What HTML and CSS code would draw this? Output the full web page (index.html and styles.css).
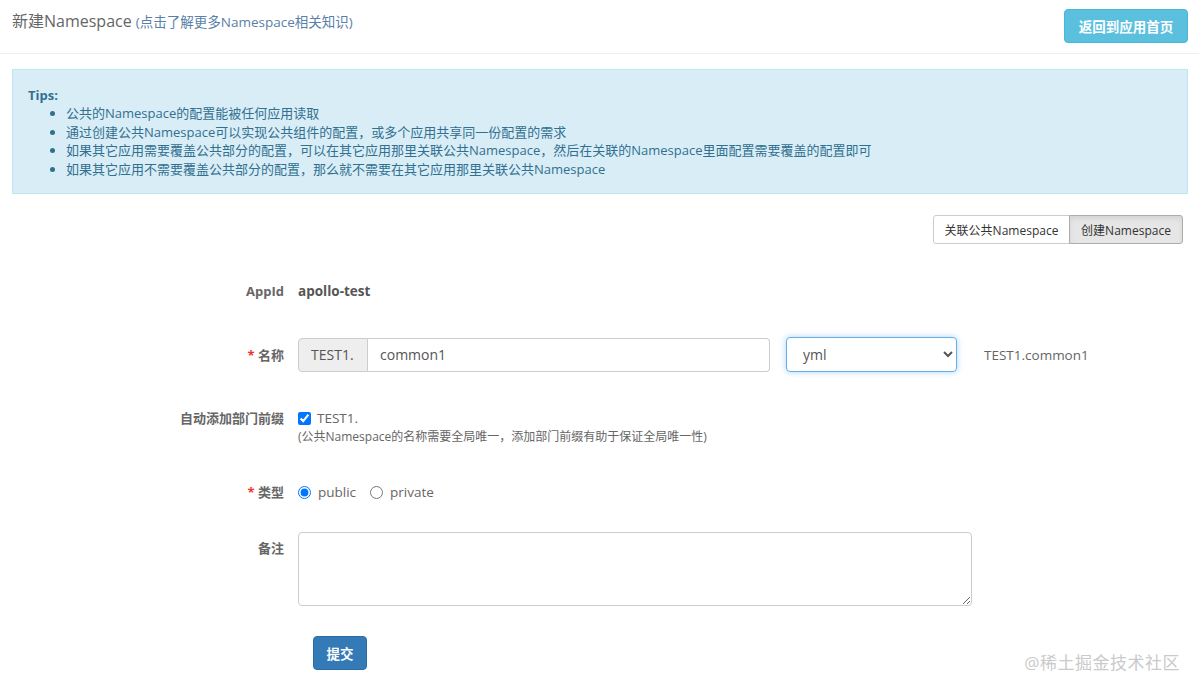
FILE: index.html
```html
<!DOCTYPE html>
<html lang="zh-CN">
<head>
<meta charset="utf-8">
<title>新建Namespace</title>
<link rel="stylesheet" href="styles.css">
</head>
<body>
<div class="page">
  <header class="header">
    <h1 class="title">新建Namespace <a class="title-link" href="#">(点击了解更多Namespace相关知识)</a></h1>
    <button class="btn btn-info">返回到应用首页</button>
  </header>

  <div class="alert">
    <div class="tips-title">Tips:</div>
    <ul class="tips-list">
      <li>公共的Namespace的配置能被任何应用读取</li>
      <li>通过创建公共Namespace可以实现公共组件的配置，或多个应用共享同一份配置的需求</li>
      <li>如果其它应用需要覆盖公共部分的配置，可以在其它应用那里关联公共Namespace，然后在关联的Namespace里面配置需要覆盖的配置即可</li>
      <li>如果其它应用不需要覆盖公共部分的配置，那么就不需要在其它应用那里关联公共Namespace</li>
    </ul>
  </div>

  <div class="toolbar">
    <div class="btn-group">
      <button class="btn-seg">关联公共Namespace</button>
      <button class="btn-seg active">创建Namespace</button>
    </div>
  </div>

  <form class="form">
    <div class="row row-appid">
      <label class="label">AppId</label>
      <div class="control"><span class="appid-value">apollo-test</span></div>
    </div>

    <div class="row row-name">
      <label class="label"><span class="req">*</span> 名称</label>
      <div class="control control-name">
        <div class="input-group">
          <span class="addon">TEST1.</span>
          <input class="input" type="text" value="common1">
        </div>
        <select class="select">
          <option>yml</option>
          <option>properties</option>
          <option>xml</option>
          <option>json</option>
          <option>yaml</option>
        </select>
        <span class="preview">TEST1.common1</span>
      </div>
    </div>

    <div class="row row-prefix">
      <label class="label">自动添加部门前缀</label>
      <div class="control">
        <label class="check"><input type="checkbox" checked> TEST1.</label>
        <div class="help">(公共Namespace的名称需要全局唯一，添加部门前缀有助于保证全局唯一性)</div>
      </div>
    </div>

    <div class="row row-type">
      <label class="label"><span class="req">*</span> 类型</label>
      <div class="control radios">
        <label class="radio"><input type="radio" name="t" checked> public</label>
        <label class="radio"><input type="radio" name="t"> private</label>
      </div>
    </div>

    <div class="row row-notes">
      <label class="label label-notes">备注</label>
      <div class="control"><textarea class="textarea"></textarea></div>
    </div>

    <div class="row row-submit">
      <button type="button" class="btn btn-primary">提交</button>
    </div>
  </form>

  <div class="watermark">@稀土掘金技术社区</div>
</div>
</body>
</html>
```

FILE: styles.css
```css
* { box-sizing: border-box; }
html, body { margin: 0; padding: 0; background: #fff; }
body {
  font-family: "Open Sans", "Noto Sans CJK SC", sans-serif;
  font-size: 13px;
  color: #333;
}
.page { position: relative; width: 1199px; height: 692px; overflow: hidden; }

.header {
  display: flex;
  justify-content: space-between;
  align-items: flex-start;
  height: 54px;
  padding: 9px 11px 0 12px;
  border-bottom: 1px solid #eeeeee;
}
.title {
  margin: 0;
  font-size: 16px;
  font-weight: normal;
  color: #666;
  line-height: 24px;
}
.title-link { font-size: 13.5px; color: #5a7fa8; text-decoration: none; }

.btn {
  border: 1px solid transparent;
  border-radius: 4px;
  font-family: inherit;
  color: #fff;
  cursor: pointer;
}
.btn-info {
  background: #5bc0de;
  border-color: #46b8da;
  font-size: 13.5px;
  font-weight: 600;
  height: 34px;
  width: 124px;
  padding: 0;
}
.btn-primary {
  background: #337ab7;
  border-color: #2e6da4;
  font-size: 13.5px;
  font-weight: 600;
  height: 34px;
  width: 54px;
  padding: 0;
}

.alert {
  margin: 15px 11px 0 12px;
  background: #d9edf7;
  border: 1px solid #bce8f1;
  color: #31708f;
  padding: 16px 15px 15px 15px;
  line-height: 18.4px;
}
.tips-title { font-weight: bold; font-size: 13px; }
.tips-list { margin: 0; padding-left: 38px; font-size: 13px; }

.toolbar { display: flex; justify-content: flex-end; padding-right: 16px; margin-top: 21px; }
.btn-group { display: flex; }
.btn-seg {
  font-family: inherit;
  font-size: 12px;
  height: 29px;
  padding: 0 10px;
  background: #fff;
  border: 1px solid #ccc;
  color: #333;
}
.btn-seg:first-child { border-radius: 3px 0 0 3px; width: 137px; }
.btn-seg:last-child { border-radius: 0 3px 3px 0; margin-left: -1px; width: 114px; }
.btn-seg.active { background: #e6e6e6; border-color: #adadad; box-shadow: inset 0 3px 5px rgba(0,0,0,.08); }

.form { display: flex; flex-direction: column; }
.row { display: flex; align-items: flex-start; }
.label {
  width: 284px;
  margin-right: 14px;
  text-align: right;
  font-weight: bold;
  color: #666;
  font-size: 13px;
  line-height: 20px;
}
.req { color: #e33; }
.control { color: #555; line-height: 20px; }

.row-appid { margin-top: 37px; }
.appid-value { font-weight: bold; color: #555; font-size: 13.5px; }

.row-name { margin-top: 36px; align-items: center; }
.row-name .label { line-height: 34px; }
.control-name { display: flex; align-items: center; }
.input-group { display: flex; width: 472px; height: 34px; }
.addon {
  display: flex; align-items: center;
  padding: 0 12px;
  width: 70px;
  background: #eee;
  border: 1px solid #ccc;
  border-radius: 4px 0 0 4px;
  font-size: 14px;
  color: #555;
}
.input {
  flex: 1;
  border: 1px solid #ccc;
  border-left: 0;
  border-radius: 0 4px 4px 0;
  padding: 0 12px;
  font-family: inherit;
  font-size: 14px;
  color: #555;
  outline: none;
}
.select {
  margin-left: 16px;
  width: 171px;
  height: 35px;
  border: 1px solid #66afe9;
  border-radius: 4px;
  box-shadow: 0 0 6px rgba(102,175,233,.55);
  padding: 0 10px 0 12px;
  font-family: inherit;
  font-size: 14px;
  color: #555;
  background: #fff;
  outline: none;
}
.preview { margin-left: 27px; font-size: 13.5px; color: #666; }

.row-prefix { margin-top: 36px; }
.check { display: flex; align-items: center; gap: 6px; font-size: 13.5px; color: #666; }
.check input { margin: 0; width: 13px; height: 13px; }
.help { font-size: 12px; color: #666; line-height: 18px; }

.row-type { margin-top: 36px; }
.radios { display: flex; gap: 14px; }
.radio { display: flex; align-items: center; gap: 7px; font-size: 13.5px; color: #666; }
.radio input { margin: 0; width: 13px; height: 13px; }

.row-notes { margin-top: 30px; }
.label-notes { padding-top: 6px; }
.textarea {
  display: block;
  width: 674px;
  height: 74px;
  border: 1px solid #ccc;
  border-radius: 4px;
  resize: both;
  font-family: inherit;
}

.row-submit { margin-top: 30px; padding-left: 313px; }

.watermark {
  position: absolute;
  right: 19px;
  bottom: 18px;
  font-size: 17px;
  color: #cacaca;
  letter-spacing: 0.5px;
}
```
